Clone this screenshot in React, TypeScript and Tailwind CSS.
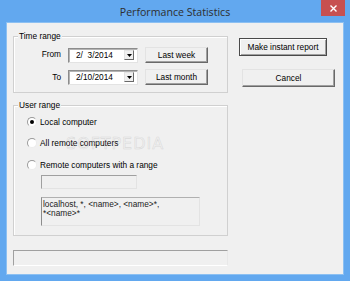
import React from "react";

const txt = "text-[8.3px] leading-[10px] text-black";

function RaisedBtn({ children, className = "" }: { children: React.ReactNode; className?: string }) {
  return (
    <div
      className={`flex items-center justify-center bg-[#f0f0f0] border border-t-[#e3e3e3] border-l-[#e3e3e3] border-r-[#696969] border-b-[#696969] shadow-[inset_-1px_-1px_0_#a0a0a0] ${txt} ${className}`}
    >
      {children}
    </div>
  );
}

function Combo({ value }: { value: string }) {
  return (
    <div className="w-[70px] h-[15px] bg-white border border-t-[#8c8c8c] border-l-[#8c8c8c] border-r-[#e3e3e3] border-b-[#e3e3e3] shadow-[inset_1px_1px_0_#b4b4b4] flex items-center">
      <span className={`flex-1 pl-[7px] whitespace-pre ${txt}`}>{value}</span>
      <div className="w-[10px] h-[10px] mr-[3px] bg-[#f0f0f0] border border-t-[#e3e3e3] border-l-[#e3e3e3] border-r-[#696969] border-b-[#696969] flex items-center justify-center">
        <svg width="5" height="3" viewBox="0 0 5 3">
          <path d="M0 0h5L2.5 3z" fill="#000" />
        </svg>
      </div>
    </div>
  );
}

function Radio({ checked, label }: { checked?: boolean; label: string }) {
  return (
    <div className="flex items-center h-[12px] pl-[13px]">
      <div className="w-[10px] h-[10px] rounded-full bg-white border border-t-[#9a9a9a] border-l-[#9a9a9a] border-r-[#ececec] border-b-[#ececec] flex items-center justify-center">
        {checked && <div className="w-[4px] h-[4px] rounded-full bg-black" />}
      </div>
      <span className={`ml-[3px] ${txt}`}>{label}</span>
    </div>
  );
}

function Group({ title, className = "", children }: { title: string; className?: string; children: React.ReactNode }) {
  return (
    <div className={`relative border border-[#d0d0d0] shadow-[inset_1px_1px_0_#ffffff] ${className}`}>
      <span className={`absolute left-[4px] -top-[6px] px-[1px] bg-[#f0f0f0] ${txt}`}>{title}</span>
      {children}
    </div>
  );
}

export default function App() {
  return (
    <div className="w-[350px] h-[281px] bg-[#62a8ef] flex flex-col overflow-hidden font-['Liberation_Sans',Arial,sans-serif]">
      <div className="relative h-[23px] flex items-center justify-center">
        <span className="font-['Open_Sans','Noto_Sans',sans-serif] text-[10.6px] text-[#2e2e2e] leading-[14px] pt-[1px]">
          Performance Statistics
        </span>
        <div className="absolute right-[5px] top-0 w-[24px] h-[16px] bg-[#c75050] flex items-center justify-center">
          <svg width="7" height="7" viewBox="0 0 7 7">
            <path d="M0.5 0.5L6.5 6.5M6.5 0.5L0.5 6.5" stroke="#fff" strokeWidth="1.4" />
          </svg>
        </div>
      </div>
      <div className="mx-[7px] h-[251px] bg-[#f0f0f0] shadow-[0_0_0_1px_#8cc0f2]">
        <div className="flex pt-[13px] pl-[6px]">
          <div className="w-[215px] flex flex-col">
            <Group title="Time range" className="h-[57px]">
              <div className="flex flex-col pt-[10px] gap-[6px]">
                <div className="flex items-center h-[16px]">
                  <span className={`w-[47px] text-right -mt-[2px] ${txt}`}>From</span>
                  <div className="ml-[7px]">
                    <Combo value="2/  3/2014" />
                  </div>
                  <RaisedBtn className="ml-[7px] w-[63px] h-[16px]">Last week</RaisedBtn>
                </div>
                <div className="flex items-center h-[16px]">
                  <span className={`w-[47px] text-right ${txt}`}>To</span>
                  <div className="ml-[7px]">
                    <Combo value="2/10/2014" />
                  </div>
                  <RaisedBtn className="ml-[7px] w-[63px] h-[16px]">Last month</RaisedBtn>
                </div>
              </div>
            </Group>
            <Group title="User range" className="mt-[12px] h-[131px]">
              <div className="flex flex-col pt-[10px]">
                <Radio checked label="Local computer" />
                <div className="mt-[9px]">
                  <Radio label="All remote computers" />
                </div>
                <div className="mt-[10px]">
                  <Radio label="Remote computers with a range" />
                </div>
                <div className="mt-[4px] ml-[27px] w-[96px] h-[14px] bg-[#f0f0f0] border border-t-[#a0a0a0] border-l-[#a0a0a0] border-r-[#e3e3e3] border-b-[#e3e3e3]" />
                <div className="mt-[8px] ml-[27px] w-[159px] h-[29px] bg-[#f0f0f0] border border-t-[#b0b0b0] border-l-[#8c8c8c] border-r-[#e3e3e3] border-b-[#e3e3e3] pl-[1px] pt-[2px]">
                  <div className="text-[8.3px] leading-[9px] text-[#222]">
                    localhost, *, &lt;name&gt;, &lt;name&gt;*,
                    <br />
                    *&lt;name&gt;*
                  </div>
                </div>
              </div>
              <span className="absolute left-[52px] top-[29px] text-[16px] leading-[18px] tracking-[1px] font-['DejaVu_Sans',sans-serif] text-transparent [-webkit-text-stroke:0.6px_rgba(190,190,190,0.45)] pointer-events-none select-none">
                SOFTPEDIA
              </span>
            </Group>
            <div className="mt-[14px] h-[16px] border border-t-[#a0a0a0] border-l-[#a0a0a0] border-r-[#e8e8e8] border-b-[#ffffff]" />
          </div>
          <div className="flex flex-col ml-[11px] pt-[2px]">
            <div className="w-[88px] h-[18px] border border-[#4a4a4a]">
              <div className={`w-full h-full flex items-center justify-center bg-[#f0f0f0] shadow-[inset_1px_1px_0_#ffffff,inset_-1px_-1px_0_#a0a0a0] ${txt}`}>
                Make instant report
              </div>
            </div>
            <RaisedBtn className="ml-[3px] mt-[13px] w-[93px] h-[18px]">Cancel</RaisedBtn>
          </div>
        </div>
      </div>
    </div>
  );
}
